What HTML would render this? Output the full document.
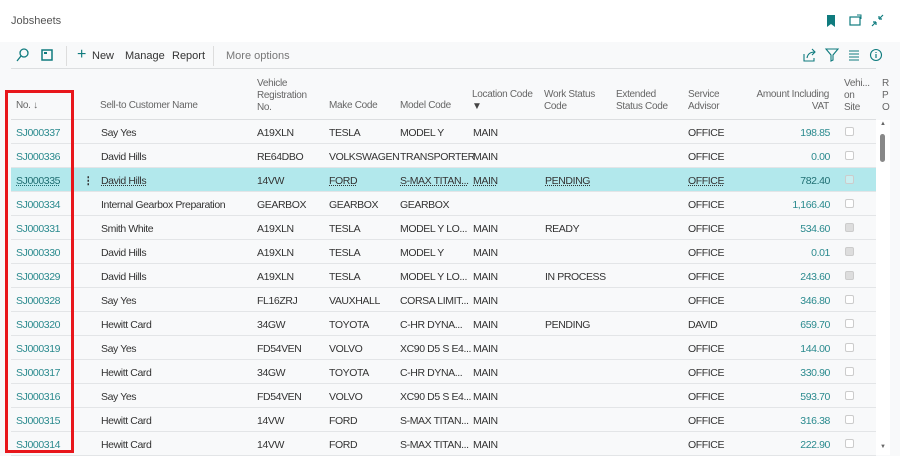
<!DOCTYPE html>
<html><head><style>
*{margin:0;padding:0;box-sizing:border-box}
body{width:900px;height:455px;overflow:hidden;background:#f8f9fa;font-family:"Liberation Sans",sans-serif;font-size:10.5px;color:#333;position:relative}
.top{position:absolute;left:0;top:0;width:900px;height:42px;background:#fff}
.a{position:absolute;white-space:nowrap}
.r{position:absolute;left:11px;width:865px;height:24px;border-bottom:1px solid #e3e5e7;letter-spacing:-0.4px}
.r span{position:absolute;top:7px;white-space:nowrap}
.r .n{left:5px;color:#2a8a8e}
.r .amt{right:46px;color:#2a8a8e;text-align:right}
.r .cb{left:834px;top:7px;width:9px;height:9px;border:1px solid #ccc;border-radius:2px;background:#fff}
.r .cb.k{background:#ddd}
.hl{background:#b2e8ec}
.hl span{text-decoration:underline dotted}
.h{position:absolute;color:#666;font-size:10px;line-height:12px;letter-spacing:-0.3px}
</style></head><body>
<div class="top"></div>
<div class="a" style="left:11px;top:15px;color:#555;font-size:11px">Jobsheets</div>
<svg class="a" style="left:826px;top:14px" width="60" height="14"><path d="M1 1h8v12l-4-3-4 3z" fill="#0f7b7e"/><rect x="24" y="3" width="10" height="8" fill="none" stroke="#0f7b7e" stroke-width="1.2"/><path d="M31 1l4 0 0 4" stroke="#0f7b7e" fill="none"/><path d="M46 12l4-4M50 8h-3M50 8v3M57 1l-4 4M53 5h3M53 5v-3" stroke="#0f7b7e" stroke-width="1.2" fill="none"/></svg>
<svg class="a" style="left:15px;top:48px" width="40" height="14"><circle cx="9" cy="5" r="4" fill="none" stroke="#0f7b7e" stroke-width="1.3"/><path d="M6 8l-4 5" stroke="#0f7b7e" stroke-width="1.3"/><rect x="27" y="2" width="10" height="10" fill="none" stroke="#0f7b7e" stroke-width="1.5"/><rect x="29" y="4" width="3" height="2" fill="#0f7b7e"/></svg>
<div class="a" style="left:66px;top:46px;width:1px;height:20px;background:#ddd"></div>
<div class="a" style="left:77px;top:46px;font-size:16px;color:#0f7b7e">+</div>
<div class="a" style="left:92px;top:50px;font-size:11px">New</div>
<div class="a" style="left:125px;top:50px;font-size:11px">Manage</div>
<div class="a" style="left:172px;top:50px;font-size:11px">Report</div>
<div class="a" style="left:213px;top:46px;width:1px;height:20px;background:#ddd"></div>
<div class="a" style="left:226px;top:50px;font-size:11px;color:#777">More options</div>
<svg class="a" style="left:803px;top:48px" width="80" height="14"><path d="M1 6v7h10v-3M4 10q1-6 8-6M9 1l3 3-3 3" fill="none" stroke="#0f7b7e" stroke-width="1.1"/><path d="M23 1h12l-5 6v5l-2 1v-6z" fill="none" stroke="#0f7b7e" stroke-width="1.1"/><path d="M46 3h10M46 6h10M46 9h10M46 12h10" stroke="#0f7b7e"/><circle cx="73" cy="7" r="5.5" fill="none" stroke="#0f7b7e" stroke-width="1.1"/><path d="M73 6v4M73 4v1" stroke="#0f7b7e" stroke-width="1.2"/></svg>
<div class="a" style="left:11px;top:68px;width:865px;height:1px;background:#dcdee0"></div>
<div class="a" style="left:876px;top:120px;width:14px;height:335px;background:#fff"></div>
<div class="a" style="left:880px;top:134px;width:5px;height:28px;background:#888;border-radius:3px"></div>
<div class="a" style="left:880px;top:121px;font-size:6px;color:#666">▲</div>
<div class="a" style="left:880px;top:444px;font-size:6px;color:#666">▼</div>
<div class="h" style="left:16px;top:100px">No. ↓</div>
<div class="h" style="left:100px;top:100px">Sell-to Customer Name</div>
<div class="h" style="left:257px;top:78px">Vehicle<br>Registration<br>No.</div>
<div class="h" style="left:329px;top:100px">Make Code</div>
<div class="h" style="left:400px;top:100px">Model Code</div>
<div class="h" style="left:472px;top:89px">Location Code<br><span style="color:#444">▼</span></div>
<div class="h" style="left:544px;top:89px">Work Status<br>Code</div>
<div class="h" style="left:616px;top:89px">Extended<br>Status Code</div>
<div class="h" style="left:688px;top:89px">Service<br>Advisor</div>
<div class="h" style="left:740px;top:89px;width:89px;text-align:right">Amount Including<br>VAT</div>
<div class="h" style="left:844px;top:78px">Vehi...<br>on<br>Site</div>
<div class="h" style="left:882px;top:78px">R<br>P<br>O</div>
<div class="a" style="left:11px;top:119px;width:865px;height:1px;background:#dcdee0"></div>

<div class="r" style="top:120px"><span class="n">SJ000337</span><span style="left:90px">Say Yes</span><span style="left:246px">A19XLN</span><span style="left:318px">TESLA</span><span style="left:389px">MODEL Y</span><span style="left:462px">MAIN</span><span style="left:677px">OFFICE</span><span class="amt">198.85</span><span class="cb"></span></div>
<div class="r" style="top:144px"><span class="n">SJ000336</span><span style="left:90px">David Hills</span><span style="left:246px">RE64DBO</span><span style="left:318px">VOLKSWAGEN</span><span style="left:389px">TRANSPORTER</span><span style="left:462px">MAIN</span><span style="left:677px">OFFICE</span><span class="amt">0.00</span><span class="cb"></span></div>
<div class="r hl" style="top:168px"><span class="n" style="color:#1f6e72">SJ000335</span><span style="left:72px;text-decoration:none;font-weight:bold">⋮</span><span style="left:90px">David Hills</span><span style="left:246px;text-decoration:none">14VW</span><span style="left:318px">FORD</span><span style="left:389px">S-MAX TITAN...</span><span style="left:462px">MAIN</span><span style="left:534px">PENDING</span><span style="left:677px">OFFICE</span><span class="amt" style="color:#1f6e72;text-decoration:none">782.40</span><span class="cb" style="background:#c8eef0"></span></div>
<div class="r" style="top:192px"><span class="n">SJ000334</span><span style="left:90px">Internal Gearbox Preparation</span><span style="left:246px">GEARBOX</span><span style="left:318px">GEARBOX</span><span style="left:389px">GEARBOX</span><span style="left:677px">OFFICE</span><span class="amt">1,166.40</span><span class="cb"></span></div>
<div class="r" style="top:216px"><span class="n">SJ000331</span><span style="left:90px">Smith White</span><span style="left:246px">A19XLN</span><span style="left:318px">TESLA</span><span style="left:389px">MODEL Y LO...</span><span style="left:462px">MAIN</span><span style="left:534px">READY</span><span style="left:677px">OFFICE</span><span class="amt">534.60</span><span class="cb k"></span></div>
<div class="r" style="top:240px"><span class="n">SJ000330</span><span style="left:90px">David Hills</span><span style="left:246px">A19XLN</span><span style="left:318px">TESLA</span><span style="left:389px">MODEL Y</span><span style="left:462px">MAIN</span><span style="left:677px">OFFICE</span><span class="amt">0.01</span><span class="cb k"></span></div>
<div class="r" style="top:264px"><span class="n">SJ000329</span><span style="left:90px">David Hills</span><span style="left:246px">A19XLN</span><span style="left:318px">TESLA</span><span style="left:389px">MODEL Y LO...</span><span style="left:462px">MAIN</span><span style="left:534px">IN PROCESS</span><span style="left:677px">OFFICE</span><span class="amt">243.60</span><span class="cb k"></span></div>
<div class="r" style="top:288px"><span class="n">SJ000328</span><span style="left:90px">Say Yes</span><span style="left:246px">FL16ZRJ</span><span style="left:318px">VAUXHALL</span><span style="left:389px">CORSA LIMIT...</span><span style="left:462px">MAIN</span><span style="left:677px">OFFICE</span><span class="amt">346.80</span><span class="cb"></span></div>
<div class="r" style="top:312px"><span class="n">SJ000320</span><span style="left:90px">Hewitt Card</span><span style="left:246px">34GW</span><span style="left:318px">TOYOTA</span><span style="left:389px">C-HR DYNA...</span><span style="left:462px">MAIN</span><span style="left:534px">PENDING</span><span style="left:677px">DAVID</span><span class="amt">659.70</span><span class="cb"></span></div>
<div class="r" style="top:336px"><span class="n">SJ000319</span><span style="left:90px">Say Yes</span><span style="left:246px">FD54VEN</span><span style="left:318px">VOLVO</span><span style="left:389px">XC90 D5 S E4...</span><span style="left:462px">MAIN</span><span style="left:677px">OFFICE</span><span class="amt">144.00</span><span class="cb"></span></div>
<div class="r" style="top:360px"><span class="n">SJ000317</span><span style="left:90px">Hewitt Card</span><span style="left:246px">34GW</span><span style="left:318px">TOYOTA</span><span style="left:389px">C-HR DYNA...</span><span style="left:462px">MAIN</span><span style="left:677px">OFFICE</span><span class="amt">330.90</span><span class="cb"></span></div>
<div class="r" style="top:384px"><span class="n">SJ000316</span><span style="left:90px">Say Yes</span><span style="left:246px">FD54VEN</span><span style="left:318px">VOLVO</span><span style="left:389px">XC90 D5 S E4...</span><span style="left:462px">MAIN</span><span style="left:677px">OFFICE</span><span class="amt">593.70</span><span class="cb"></span></div>
<div class="r" style="top:408px"><span class="n">SJ000315</span><span style="left:90px">Hewitt Card</span><span style="left:246px">14VW</span><span style="left:318px">FORD</span><span style="left:389px">S-MAX TITAN...</span><span style="left:462px">MAIN</span><span style="left:677px">OFFICE</span><span class="amt">316.38</span><span class="cb"></span></div>
<div class="r" style="top:432px"><span class="n">SJ000314</span><span style="left:90px">Hewitt Card</span><span style="left:246px">14VW</span><span style="left:318px">FORD</span><span style="left:389px">S-MAX TITAN...</span><span style="left:462px">MAIN</span><span style="left:677px">OFFICE</span><span class="amt">222.90</span><span class="cb"></span></div>

<div class="a" style="left:5px;top:90px;width:69px;height:363px;border:3px solid #e8161b"></div>
</body></html>
